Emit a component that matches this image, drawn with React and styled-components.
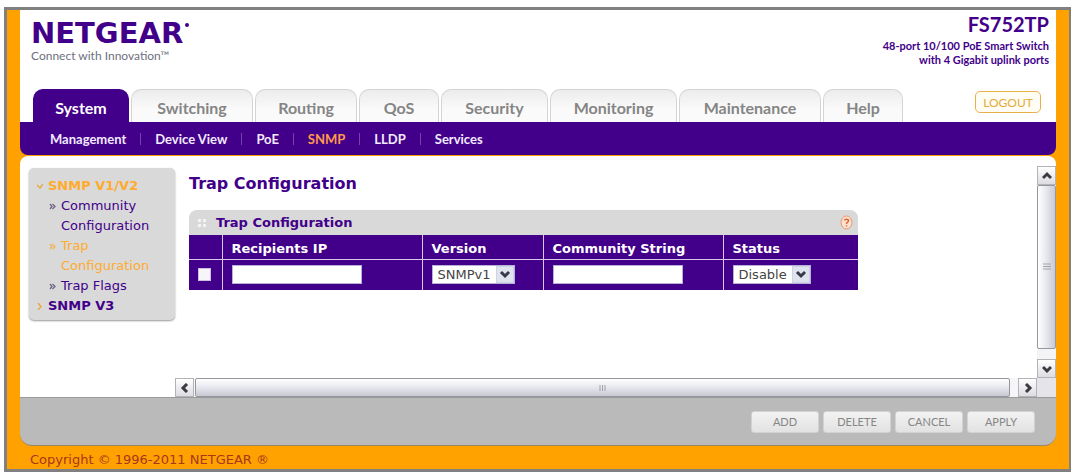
import styled, { createGlobalStyle } from "styled-components";

const GlobalStyle = createGlobalStyle`
  * {
    box-sizing: border-box;
  }

  body {
    margin: 0;
    background: #fff;
    color: #42008a;
    font-family: "DejaVu Sans", sans-serif;
    font-size: 13px;
  }

  button, input, select {
    font: inherit;
    margin: 0;
  }

  a {
    color: inherit;
    text-decoration: none;
  }

  ul {
    list-style: none;
    margin: 0;
    padding: 0;
  }
`;

const Frame = styled.div`
  display: flex;
  flex-direction: column;
  min-height: calc(100vh - 8px);
  margin: 7px 5px 0 4px;
  padding: 0 13px;
  border: 3px solid #808080;
  border-right-width: 2px;
  background: #ffa200;
`;

const Header = styled.header`
  display: flex;
  justify-content: space-between;
  height: 79px;
  padding: 0 7px 0 11px;
  background: #fff;
`;

const Brand = styled.div`
  padding-top: 7px;
`;

const Wordmark = styled.div`
  display: flex;
  font-size: 29px;
  font-weight: 700;
  line-height: 32px;
`;

const Dot = styled.span`
  width: 4px;
  height: 4px;
  margin: 6px 0 0 2px;
  border-radius: 50%;
  background: #42008a;
`;

const Tagline = styled.div`
  color: #6e7080;
  font-family: Lato, sans-serif;
  font-size: 12px;
  line-height: 14px;
`;

const Product = styled.div`
  padding-top: 2px;
  font-family: Lato, sans-serif;
  font-size: 11px;
  font-weight: 700;
  line-height: 14px;
  text-align: right;
`;

const Model = styled.div`
  font-size: 20px;
  line-height: 24px;
  margin-bottom: 3px;
`;

const TabBar = styled.nav`
  display: flex;
  gap: 2px;
  height: 33px;
  padding: 0 15px 0 13px;
  background: #fff;
`;

const Tab = styled.a`
  display: flex;
  align-items: center;
  justify-content: center;
  width: ${(props) => props.$width}px;
  padding-top: 2px;
  border: 1px solid ${(props) => (props.$active ? "#42008a" : "#d4d4d4")};
  border-bottom: 0;
  border-radius: 10px 10px 0 0;
  background: ${(props) =>
    props.$active ? "#42008a" : "linear-gradient(#ececec, #fafafa 60%)"};
  color: ${(props) => (props.$active ? "#fff" : "#858585")};
  font-family: Lato, sans-serif;
  font-size: 16px;
  font-weight: 700;
`;

const Logout = styled.button`
  width: 66px;
  height: 22px;
  margin: 2px 0 0 auto;
  padding: 0;
  border: 1px solid #e9b04a;
  border-radius: 5px;
  background: #fffdf4;
  color: #e5a93c;
  font-family: Lato, sans-serif;
  font-size: 12px;
`;

const SubNav = styled.nav`
  display: flex;
  align-items: center;
  height: 33px;
  padding-left: 16px;
  border-radius: 0 0 8px 8px;
  background: #42008a;
  color: #fff;
  font-family: Lato, sans-serif;
  font-size: 13px;
  font-weight: 700;
`;

const SubLink = styled.a`
  padding: 0 14px;
  color: ${(props) => (props.$active ? "#ff9a4a" : "#f3eaff")};
  line-height: 12px;

  & + & {
    border-left: 1px solid #7444ad;
  }
`;

const Body = styled.div`
  display: flex;
  flex: 1;
  margin-top: 1px;
  border-radius: 8px 8px 0 0;
  background: #fff;
`;

const Sidebar = styled.aside`
  align-self: flex-start;
  width: 146px;
  margin: 12px 0 0 9px;
  padding: 8px 6px 4px 8px;
  border-radius: 5px;
  background: #d9d9d9;
  box-shadow: 0 1px 2px #999;
`;

const SideItem = styled.li`
  display: flex;
  align-items: flex-start;
  gap: 5px;
  padding-left: ${(props) => (props.$sub ? 12 : 0)}px;
  color: ${(props) => (props.$active ? "#ffab2e" : "#42008a")};
  font-weight: ${(props) => (props.$sub ? 400 : 700)};
  line-height: 20px;

  svg {
    flex: none;
    margin-top: 7px;
  }
`;

const Pane = styled.div`
  display: grid;
  flex: 1;
  grid-template-columns: minmax(0, 1fr) 19px;
  grid-template-rows: 1fr 19px;
  padding-top: 10px;
`;

const Main = styled.main`
  padding: 7px 14px 24px 14px;
`;

const Title = styled.h1`
  margin: 0 0 16px;
  font-size: 16px;
  line-height: 21px;
`;

const Panel = styled.section`
  max-width: 669px;
`;

const PanelHead = styled.div`
  display: flex;
  align-items: center;
  height: 25px;
  padding: 0 5px 0 9px;
  border-radius: 8px 8px 0 0;
  background: #d9d9d9;
`;

const PanelTitle = styled.h2`
  flex: 1;
  margin: 0 0 0 9px;
  font-size: 13px;
`;

const HelpButton = styled.button`
  display: flex;
  padding: 0;
  border: 0;
  background: none;
`;

const Table = styled.table`
  width: 100%;
  border-collapse: collapse;
  table-layout: fixed;
  background: #42008a;
`;

const Th = styled.th`
  width: ${(props) => props.$width};
  height: 24px;
  padding: 4px 0 0 9px;
  border-left: 1px solid #d8c8ea;
  border-bottom: 1px solid #d8c8ea;
  color: #fff;
  font-size: 13px;
  text-align: left;

  &:first-child {
    border-left: 0;
  }
`;

const Td = styled.td`
  height: 31px;
  padding: 0 0 0 9px;
  border-left: 1px solid #d8c8ea;

  &:first-child {
    border-left: 0;
  }
`;

const Check = styled.input`
  display: block;
  appearance: none;
  width: 13px;
  height: 13px;
  border: 1px solid #c9bfe0;
  background: #f7f5f7;

  &:checked {
    background: #ffa200;
  }
`;

const TextBox = styled.input`
  display: block;
  width: 130px;
  height: 19px;
  padding: 0 3px;
  border: 1px solid #b9b0d8;
  background: #fff;
`;

const SelectBox = styled.div`
  position: relative;
  width: ${(props) => props.$width}px;

  select {
    display: block;
    appearance: none;
    width: 100%;
    height: 19px;
    padding: 0 20px 0 5px;
    border: 1px solid #b9b0d8;
    border-radius: 0;
    background: #fff;
    color: #444;
    line-height: 17px;
  }

  svg {
    position: absolute;
    top: 1px;
    right: 1px;
    pointer-events: none;
  }
`;

const VScroll = styled.div`
  display: flex;
  flex-direction: column;
  background: #f4f3f6;
`;

const HScroll = styled.div`
  display: flex;
  background: #f6f5f8;
`;

const ScrollButton = styled.button`
  display: flex;
  align-items: center;
  justify-content: center;
  flex: none;
  width: 19px;
  height: 19px;
  padding: 0;
  border: 1px solid #b4b4b8;
  background: linear-gradient(#fff, #dcdce2);
`;

const Thumb = styled.div`
  display: flex;
  align-items: center;
  justify-content: center;
  flex: 1;
  border: 1px solid #96969e;
  border-radius: 2px;
  background: linear-gradient(
    ${(props) => (props.$vertical ? "90deg" : "180deg")},
    #fff,
    #e6e6ee 50%,
    #c9c9d3
  );
  margin: ${(props) => (props.$vertical ? "0 0 10px" : "0 8px 0 1px")};
`;

const Corner = styled.div`
  background: #e4e4ea;
`;

const Footer = styled.footer`
  display: flex;
  align-items: center;
  justify-content: flex-end;
  gap: 4px;
  height: 49px;
  padding-right: 21px;
  border-top: 1px solid #9a9a9a;
  border-bottom: 1px solid #9a8660;
  border-radius: 0 0 12px 12px;
  background: #bababa;
`;

const ActionButton = styled.button`
  width: 68px;
  height: 22px;
  padding: 0;
  border: 1px solid #d2d2d2;
  border-radius: 3px;
  background: linear-gradient(#f2f2f2, #e2e2e2);
  color: #858585;
  font-family: Lato, sans-serif;
  font-size: 11px;
`;

const Copyright = styled.p`
  margin: 0;
  padding: 5px 10px 0;
  color: #a8371c;
  font-size: 13px;
  line-height: 18px;
`;

const tabs = [
  { label: "System", width: 96, active: true },
  { label: "Switching", width: 122 },
  { label: "Routing", width: 102 },
  { label: "QoS", width: 80 },
  { label: "Security", width: 107 },
  { label: "Monitoring", width: 127 },
  { label: "Maintenance", width: 142 },
  { label: "Help", width: 80 },
];

const subLinks = ["Management", "Device View", "PoE", "SNMP", "LLDP", "Services"];

const sideItems = [
  { label: "SNMP V1/V2", active: true, open: true },
  { label: "Community Configuration", sub: true },
  { label: "Trap Configuration", sub: true, active: true },
  { label: "Trap Flags", sub: true },
  { label: "SNMP V3" },
];

const actions = ["ADD", "DELETE", "CANCEL", "APPLY"];

const chevrons = {
  up: "M1 7 5 3 9 7",
  down: "M1 3 5 7 9 3",
  left: "M7 1 3 5 7 9",
  right: "M3 1 7 5 3 9",
};

function Chevron({ dir }) {
  return (
    <svg width="10" height="10" viewBox="0 0 10 10">
      <path d={chevrons[dir]} fill="none" stroke="#3c3c40" strokeWidth="3" />
    </svg>
  );
}

function Bullet({ item }) {
  if (item.sub) {
    return (
      <svg width="7" height="7" viewBox="0 0 7 7">
        <path
          d="M1 1 3 3.5 1 6M3.5 1 6 3.5 3.5 6"
          fill="none"
          stroke={item.active ? "#efb35c" : "#6d6288"}
          strokeWidth="1.3"
        />
      </svg>
    );
  }

  return (
    <svg width="6" height="7" viewBox="0 0 6 7">
      <path
        d={item.open ? "M0 2 3 5 6 1" : "M1 0 4 3.5 1 7"}
        fill="none"
        stroke="#e9a83d"
        strokeWidth="1.4"
      />
    </svg>
  );
}

function Grip({ vertical }) {
  return (
    <svg width="8" height="8" viewBox="0 0 8 8">
      <path
        d={vertical ? "M0 1H8M0 3.5H8M0 6H8" : "M1 1V7M3.5 1V7M6 1V7"}
        stroke="#a2a2aa"
      />
    </svg>
  );
}

function Dropdown({ label, width, options }) {
  return (
    <SelectBox $width={width}>
      <select aria-label={label}>
        {options.map((option) => (
          <option key={option}>{option}</option>
        ))}
      </select>
      <svg width="18" height="17" viewBox="0 0 18 17">
        <rect width="18" height="17" fill="#cdd3e8" />
        <rect x="1" y="1" width="16" height="15" rx="1" fill="#dfe3ee" />
        <path d="M5 6 9 10 13 6" fill="none" stroke="#35394a" strokeWidth="3" />
      </svg>
    </SelectBox>
  );
}

function App() {
  return (
    <>
      <GlobalStyle />
      <Frame>
        <Header>
          <Brand>
            <Wordmark>
              NETGEAR
              <Dot />
            </Wordmark>
            <Tagline>Connect with Innovation™</Tagline>
          </Brand>
          <Product>
            <Model>FS752TP</Model>
            48-port 10/100 PoE Smart Switch
            <br />
            with 4 Gigabit uplink ports
          </Product>
        </Header>
        <TabBar>
          {tabs.map((tab) => (
            <Tab key={tab.label} href="#" $width={tab.width} $active={tab.active}>
              {tab.label}
            </Tab>
          ))}
          <Logout>LOGOUT</Logout>
        </TabBar>
        <SubNav>
          {subLinks.map((label) => (
            <SubLink key={label} href="#" $active={label === "SNMP"}>
              {label}
            </SubLink>
          ))}
        </SubNav>
        <Body>
          <Sidebar>
            <ul>
              {sideItems.map((item) => (
                <SideItem key={item.label} $sub={item.sub} $active={item.active}>
                  <Bullet item={item} />
                  <a href="#">{item.label}</a>
                </SideItem>
              ))}
            </ul>
          </Sidebar>
          <Pane>
            <Main>
              <Title>Trap Configuration</Title>
              <Panel>
                <PanelHead>
                  <svg width="9" height="8" viewBox="0 0 9 8">
                    <path
                      d="M0 0h3v3H0zM5 0h3v3H5zM0 5h3v3H0zM5 5h3v3H5z"
                      fill="#f4f4f4"
                    />
                  </svg>
                  <PanelTitle>Trap Configuration</PanelTitle>
                  <HelpButton aria-label="Help">
                    <svg width="13" height="15" viewBox="0 0 13 15">
                      <ellipse
                        cx="6.5"
                        cy="7.5"
                        rx="5.5"
                        ry="6.5"
                        fill="#fbe3d3"
                        stroke="#ee9468"
                      />
                      <path
                        d="M4.5 5.5C4.5 3.8 8.5 3.8 8.5 5.8 8.5 7.3 6.5 7.3 6.5 9M6.5 10.3V11.5"
                        fill="none"
                        stroke="#e2622d"
                        strokeWidth="1.5"
                      />
                    </svg>
                  </HelpButton>
                </PanelHead>
                <Table>
                  <thead>
                    <tr>
                      <Th $width="33px" />
                      <Th $width="200px">Recipients IP</Th>
                      <Th $width="121px">Version</Th>
                      <Th $width="180px">Community String</Th>
                      <Th>Status</Th>
                    </tr>
                  </thead>
                  <tbody>
                    <tr>
                      <Td>
                        <Check type="checkbox" aria-label="Select row" />
                      </Td>
                      <Td>
                        <TextBox type="text" aria-label="Recipients IP" />
                      </Td>
                      <Td>
                        <Dropdown
                          label="Version"
                          width={83}
                          options={["SNMPv1", "SNMPv2"]}
                        />
                      </Td>
                      <Td>
                        <TextBox type="text" aria-label="Community String" />
                      </Td>
                      <Td>
                        <Dropdown
                          label="Status"
                          width={78}
                          options={["Disable", "Enable"]}
                        />
                      </Td>
                    </tr>
                  </tbody>
                </Table>
              </Panel>
            </Main>
            <VScroll>
              <ScrollButton aria-label="Scroll up">
                <Chevron dir="up" />
              </ScrollButton>
              <Thumb $vertical>
                <Grip vertical />
              </Thumb>
              <ScrollButton aria-label="Scroll down">
                <Chevron dir="down" />
              </ScrollButton>
            </VScroll>
            <HScroll>
              <ScrollButton aria-label="Scroll left">
                <Chevron dir="left" />
              </ScrollButton>
              <Thumb>
                <Grip />
              </Thumb>
              <ScrollButton aria-label="Scroll right">
                <Chevron dir="right" />
              </ScrollButton>
            </HScroll>
            <Corner />
          </Pane>
        </Body>
        <Footer>
          {actions.map((label) => (
            <ActionButton key={label}>{label}</ActionButton>
          ))}
        </Footer>
        <Copyright>Copyright © 1996-2011 NETGEAR ®</Copyright>
      </Frame>
    </>
  );
}

export default App;
